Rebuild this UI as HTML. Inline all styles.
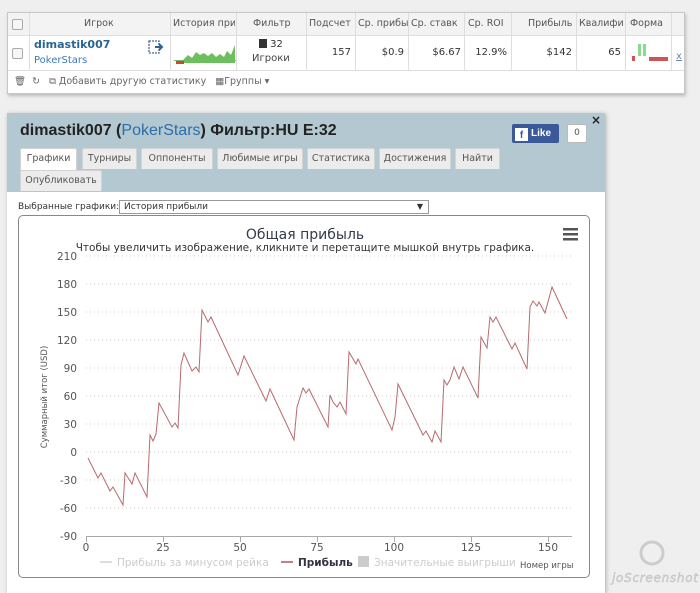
<!DOCTYPE html>
<html><head><meta charset="utf-8"><style>
*{margin:0;padding:0;box-sizing:border-box}
body{width:700px;height:586px;background:#efefef;font-family:"DejaVu Sans","Liberation Sans",sans-serif;font-size:10px;color:#333;position:relative;overflow:hidden}
.abs{position:absolute}
.tbl{left:7px;top:12px;width:678px;height:82px;background:#fff;border:1px solid #c8c8c8;box-shadow:1px 2px 3px #bbb}
.hdr{left:0;top:0;width:676px;height:23px;background:#f3f3f3;border-bottom:1px solid #ddd}
.c{position:absolute;top:0;height:57px;border-right:1px solid #ddd}
.ht{position:absolute;top:5px;color:#555;font-size:9.5px;white-space:nowrap;overflow:hidden}
.dt{position:absolute;top:34px;font-size:10px;color:#333;text-align:right}
.cb{position:absolute;width:11px;height:11px;border:1px solid #aaa;border-radius:2px;background:#f6f6f6}
.panel{left:7px;top:113px;width:598px;height:480px;background:#fff;box-shadow:1px 1px 4px #aaa}
.ph{left:0;top:0;width:598px;height:78px;background:#b4c8d1}
.tab{position:absolute;height:21px;background:#ececec;border:1px solid #d3d3d3;border-bottom:none;color:#555;font-size:9.5px;text-align:center;line-height:20px;border-radius:2px 2px 0 0}
</style></head><body>

<div class="abs tbl">
 <div class="abs hdr"></div>
 <div class="c" style="left:0;width:22px"></div>
 <div class="c" style="left:22px;width:141px"></div>
 <div class="c" style="left:163px;width:66px"></div>
 <div class="c" style="left:229px;width:70px"></div>
 <div class="c" style="left:299px;width:49px"></div>
 <div class="c" style="left:348px;width:53px"></div>
 <div class="c" style="left:401px;width:56px"></div>
 <div class="c" style="left:457px;width:47px"></div>
 <div class="c" style="left:504px;width:65px"></div>
 <div class="c" style="left:569px;width:49px"></div>
 <div class="c" style="left:618px;width:46px"></div>
 <div class="abs" style="left:0;top:57px;width:676px;height:1px;background:#ddd"></div>
 <div class="cb" style="left:4px;top:6px"></div>
 <div class="cb" style="left:4px;top:35px"></div>
 <div class="ht" style="left:76px">Игрок</div>
 <div class="ht" style="left:165px;width:62px">История при</div>
 <div class="ht" style="left:245px">Фильтр</div>
 <div class="ht" style="left:301px">Подсчет</div>
 <div class="ht" style="left:350px;width:50px">Ср. прибы</div>
 <div class="ht" style="left:403px;width:53px">Ср. ставк</div>
 <div class="ht" style="left:460px">Ср. ROI</div>
 <div class="ht" style="left:520px">Прибыль</div>
 <div class="ht" style="left:571px;width:46px">Квалифи</div>
 <div class="ht" style="left:622px">Форма</div>
 <div class="abs" style="left:26px;top:25px;font-weight:bold;color:#2a6496;font-size:11px">dimastik007</div>
 <div class="abs" style="left:26px;top:42px;color:#3a7ab8;font-size:10px">PokerStars</div>
 <svg class="abs" style="left:140px;top:26px" width="16" height="16"><rect x="1" y="2" width="10" height="12" fill="#fff" stroke="#4a6a8a" stroke-width="1.3" stroke-dasharray="2 1"/><path d="M7 8h7M11 5l3 3-3 3" stroke="#2a6496" stroke-width="2" fill="none"/></svg>
 <svg class="abs" style="left:166px;top:28px" width="62" height="24"><path d="M8 22V20L14 14 18 17 22 11 26 14 30 12 34 15 38 12 42 16 46 13 50 16 53 10 57 14 61 4V22Z" fill="#6cbf5c"/><rect x="0" y="19" width="62" height="1" fill="#6cbf5c"/><rect x="2" y="20" width="8" height="3" fill="#c44"/></svg>
 <div class="abs" style="left:251px;top:26px;font-size:10px"><span style="display:inline-block;width:8px;height:9px;background:#333;vertical-align:-1px"></span> 32</div>
 <div class="abs" style="left:244px;top:40px;font-size:10px;color:#444">Игроки</div>
 <div class="dt" style="left:299px;width:44px">157</div>
 <div class="dt" style="left:348px;width:48px">$0.9</div>
 <div class="dt" style="left:401px;width:52px">$6.67</div>
 <div class="dt" style="left:457px;width:42px">12.9%</div>
 <div class="dt" style="left:504px;width:60px">$142</div>
 <div class="dt" style="left:569px;width:44px">65</div>
 <svg class="abs" style="left:622px;top:30px" width="40" height="22"><rect x="8" y="1" width="3" height="12" fill="#8d8"/><rect x="13" y="1" width="3" height="12" fill="#8d8"/><rect x="2" y="13" width="3" height="5" fill="#c55"/><rect x="19" y="14" width="19" height="4" fill="#c55"/></svg>
 <div class="abs" style="left:668px;top:38px;color:#68a;font-size:10px;text-decoration:underline">x</div>
 <div class="abs" style="left:6px;top:63px;color:#666;font-size:9.5px">🗑 &nbsp;↻ &nbsp; ⧉ Добавить другую статистику &nbsp; ▦Группы ▾</div>
</div>

<div class="abs panel">
 <div class="abs ph"></div>
 <div class="abs" style="left:13px;top:9px;font-family:'Liberation Sans',sans-serif;font-size:16px;font-weight:bold;color:#222">dimastik007 (<span style="color:#2a6eaa;font-weight:normal">PokerStars</span>) Фильтр:HU E:32</div>
 <div class="abs" style="left:505px;top:11px;width:47px;height:19px;background:#3b5998;border-radius:2px;color:#fff;font-weight:bold;font-size:10px;line-height:19px;font-family:'Liberation Sans',sans-serif"><span style="display:inline-block;width:13px;height:13px;background:#fff;color:#3b5998;margin:0 3px 0 3px;vertical-align:-2px;text-align:center;line-height:15px">f</span>Like</div>
 <div class="abs" style="left:560px;top:11px;width:20px;height:19px;background:#fff;border:1px solid #bbb;border-radius:2px;text-align:center;line-height:17px;font-size:9px;color:#555">0</div>
 <div class="abs" style="left:584px;top:0;font-weight:bold;font-size:12px;color:#222">×</div>
 <div class="tab" style="left:13px;top:35px;width:57px;background:#fff;height:22px">Графики</div>
 <div class="tab" style="left:75px;top:35px;width:55px">Турниры</div>
 <div class="tab" style="left:134px;top:35px;width:72px">Оппоненты</div>
 <div class="tab" style="left:210px;top:35px;width:86px">Любимые игры</div>
 <div class="tab" style="left:300px;top:35px;width:68px">Статистика</div>
 <div class="tab" style="left:372px;top:35px;width:72px">Достижения</div>
 <div class="tab" style="left:448px;top:35px;width:45px">Найти</div>
 <div class="tab" style="left:13px;top:57px;width:82px">Опубликовать</div>
 <div class="abs" style="left:0;top:78px;width:598px;height:1px;background:#b4c8d1"></div>
 <div class="abs" style="left:11px;top:89px;font-size:9px;color:#333">Выбранные графики:</div>
 <div class="abs" style="left:112px;top:87px;width:310px;height:14px;border:1px solid #999;font-size:9px;padding-left:4px;line-height:12px">История прибыли<span style="position:absolute;right:5px;top:0;font-size:8px">▼</span></div>
 <div class="abs" style="left:11px;top:102px;width:572px;height:363px;border:1px solid #888;border-radius:5px"></div>
</div>

<svg class="abs" style="left:0;top:0" width="700" height="586" font-family="DejaVu Sans, Liberation Sans, sans-serif">
 <text x="305" y="239" text-anchor="middle" font-size="14" fill="#333c4c">Общая прибыль</text>
 <text x="305" y="251" text-anchor="middle" font-size="10.5" fill="#333">Чтобы увеличить изображение, кликните и перетащите мышкой внутрь графика.</text>
 <g fill="#555"><rect x="563" y="228" width="15" height="2.5"/><rect x="563" y="233" width="15" height="2.5"/><rect x="563" y="238" width="15" height="2.5"/></g>
 <g stroke="#ccc" stroke-dasharray="1 3">
  <line x1="86" y1="256" x2="572" y2="256"/><line x1="86" y1="284" x2="572" y2="284"/><line x1="86" y1="312" x2="572" y2="312"/><line x1="86" y1="340" x2="572" y2="340"/><line x1="86" y1="368" x2="572" y2="368"/><line x1="86" y1="396" x2="572" y2="396"/><line x1="86" y1="424" x2="572" y2="424"/><line x1="86" y1="452" x2="572" y2="452"/><line x1="86" y1="480" x2="572" y2="480"/><line x1="86" y1="508" x2="572" y2="508"/>
 </g>
 <line x1="86" y1="536.5" x2="572" y2="536.5" stroke="#aaa"/>
 <g stroke="#aaa"><line x1="86.5" y1="537" x2="86.5" y2="542"/><line x1="163.5" y1="537" x2="163.5" y2="542"/><line x1="240.5" y1="537" x2="240.5" y2="542"/><line x1="317.5" y1="537" x2="317.5" y2="542"/><line x1="394.5" y1="537" x2="394.5" y2="542"/><line x1="471.5" y1="537" x2="471.5" y2="542"/><line x1="548.5" y1="537" x2="548.5" y2="542"/></g>
 <g font-size="10.5" fill="#555" text-anchor="end">
  <text x="77" y="260">210</text><text x="77" y="288">180</text><text x="77" y="316">150</text><text x="77" y="344">120</text><text x="77" y="372">90</text><text x="77" y="400">60</text><text x="77" y="428">30</text><text x="77" y="456">0</text><text x="77" y="484">-30</text><text x="77" y="512">-60</text><text x="77" y="540">-90</text>
 </g>
 <g font-size="10.5" fill="#555" text-anchor="middle">
  <text x="86" y="551">0</text><text x="163" y="551">25</text><text x="240" y="551">50</text><text x="317" y="551">75</text><text x="394" y="551">100</text><text x="471" y="551">125</text><text x="548" y="551">150</text>
 </g>
 <text transform="translate(47,397) rotate(-90)" text-anchor="middle" font-size="8.5" fill="#555">Суммарный итог (USD)</text>
 <polyline fill="none" stroke="#b86a6e" stroke-width="1" points="88,458 98,478 101,473 110,491 113,487 123,505 125,473 132,484 135,473 147,497 150,435 153,441 156,434 159,403 172,427 175,423 178,428 181,365 184,353 192,371 196,367 199,372 202,310 208,322 211,317 238,375 244,356 266,401 270,389 294,440 297,407 303,388 306,393 309,389 328,427 330,395 333,402 337,407 340,402 346,414 349,352 356,364 358,359 392,430 395,417 398,384 423,435 426,431 432,442 435,431 441,442 444,380 447,385 450,380 454,367 459,379 463,367 478,398 481,337 487,348 490,317 493,322 496,317 512,349 515,343 527,369 530,307 533,301 537,306 539,302 545,313 552,287 567,319"/>
 <line x1="100" y1="562" x2="112" y2="562" stroke="#ddd" stroke-width="2"/>
 <text x="117" y="566" font-size="10.5" fill="#ccc">Прибыль за минусом рейка</text>
 <line x1="281" y1="562" x2="293" y2="562" stroke="#c08085" stroke-width="2"/>
 <text x="298" y="566" font-size="10.5" fill="#334" font-weight="bold">Прибыль</text>
 <rect x="358" y="556" width="11" height="11" fill="#ccc"/>
 <text x="374" y="566" font-size="10.5" fill="#ccc">Значительные выигрыши</text>
 <text x="520" y="568" font-size="8.5" fill="#555">Номер игры</text>
 <text x="612" y="582" font-size="12" font-style="italic" fill="#d6d6d6" stroke="#bbb" stroke-width="0.4" textLength="86">joScreenshot</text>
 <circle cx="652" cy="553" r="11" fill="none" stroke="#ccc" stroke-width="3"/>
</svg>
</body></html>
